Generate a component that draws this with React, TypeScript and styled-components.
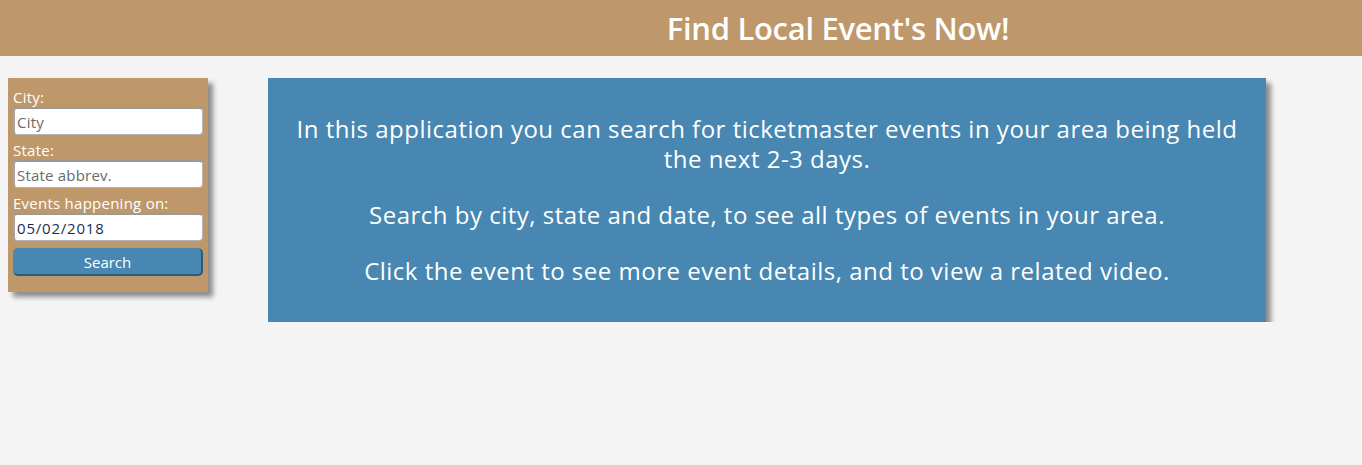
import React from "react";
import styled, { createGlobalStyle } from "styled-components";

const Global = createGlobalStyle`
  html, body { margin: 0; padding: 0; background: #f4f4f4; }
  body { font-family: "Open Sans", "Noto Sans", sans-serif; }
`;

const Header = styled.header`
  height: 56px;
  background: #be976a;
  display: flex;
  align-items: center;
  justify-content: center;
  padding-left: 314px;
`;

const Title = styled.h1`
  margin: 0;
  color: #ffffff;
  font-size: 31px;
  font-weight: 600;
  letter-spacing: -0.3px;
`;

const Body = styled.main`
  display: flex;
  align-items: flex-start;
  padding: 22px 0 0 8px;
  gap: 60px;
`;

const Sidebar = styled.form`
  width: 200px;
  box-sizing: border-box;
  background: #be976a;
  padding: 10px 5px 16px 5px;
  box-shadow: 5px 5px 5px #8c8c8c;
  display: flex;
  flex-direction: column;
`;

const Label = styled.label`
  color: #ffffff;
  font-size: 15px;
  line-height: 18px;
  letter-spacing: 0.25px;
`;

const Input = styled.input<{ $value?: boolean }>`
  box-sizing: border-box;
  width: 190px;
  height: 28px;
  margin: 1px 0 6px;
  padding: 0 2px;
  border: 1px solid #b4b4b4;
  border-top: 2px solid #9a9a9a;
  border-left: 2px solid #a4a4a4;
  border-radius: 4px;
  background: #ffffff;
  font-family: inherit;
  font-size: 15px;
  letter-spacing: ${(p) => (p.$value ? "0.8px" : "0.2px")};
  color: ${(p) => (p.$value ? "#1b2e55" : "#555")};
  &::placeholder { color: #6a6a6a; }
`;

const Button = styled.button`
  box-sizing: border-box;
  width: 190px;
  height: 28px;
  margin-top: 1px;
  background: #4787b2;
  color: #ffffff;
  font-family: inherit;
  font-size: 15px;
  border: 2px solid #2b5a7a;
  border-top: 1px solid #4787b2;
  border-left: 1px solid #4787b2;
  border-radius: 5px;
`;

const Intro = styled.section`
  width: 998px;
  box-sizing: border-box;
  background: #4787b2;
  box-shadow: 5px 5px 5px #8c8c8c;
  padding: 36px 20px 36px;
  text-align: center;
  color: #ffffff;
`;

const Para = styled.p`
  margin: 0 0 26px;
  font-size: 24px;
  line-height: 30px;
  letter-spacing: 0.5px;
  &:last-child { margin-bottom: 0; }
`;

export default function App() {
  return (
    <>
      <Global />
      <Header>
        <Title>Find Local Event's Now!</Title>
      </Header>
      <Body>
        <Sidebar onSubmit={(e) => e.preventDefault()}>
          <Label>City:</Label>
          <Input placeholder="City" />
          <Label>State:</Label>
          <Input placeholder="State abbrev." />
          <Label>Events happening on:</Label>
          <Input $value defaultValue="05/02/2018" />
          <Button type="submit">Search</Button>
        </Sidebar>
        <Intro>
          <Para>
            In this application you can search for ticketmaster events in your
            area being held the next 2-3 days.
          </Para>
          <Para>
            Search by city, state and date, to see all types of events in your
            area.
          </Para>
          <Para>
            Click the event to see more event details, and to view a related
            video.
          </Para>
        </Intro>
      </Body>
    </>
  );
}
